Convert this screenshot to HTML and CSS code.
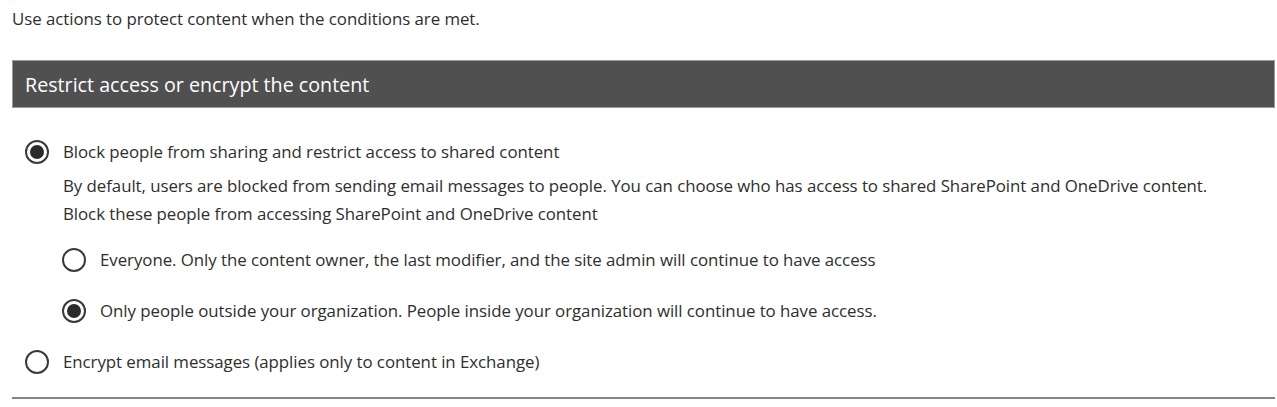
FILE: index.html
```html
<!DOCTYPE html>
<html>
<head>
<meta charset="utf-8">
<link rel="stylesheet" href="styles.css">
</head>
<body>
<div class="page">
  <p class="intro">Use actions to protect content when the conditions are met.</p>
  <div class="section-header">Restrict access or encrypt the content</div>
  <div class="options">
    <div class="option">
      <span class="radio checked"></span>
      <span class="label">Block people from sharing and restrict access to shared content</span>
    </div>
    <div class="details">
      <p class="desc">By default, users are blocked from sending email messages to people. You can choose who has access to shared SharePoint and OneDrive content.</p>
      <p class="desc">Block these people from accessing SharePoint and OneDrive content</p>
      <div class="sub-options">
        <div class="option">
          <span class="radio"></span>
          <span class="label">Everyone. Only the content owner, the last modifier, and the site admin will continue to have access</span>
        </div>
        <div class="option">
          <span class="radio checked"></span>
          <span class="label">Only people outside your organization. People inside your organization will continue to have access.</span>
        </div>
      </div>
    </div>
    <div class="option">
      <span class="radio"></span>
      <span class="label">Encrypt email messages (applies only to content in Exchange)</span>
    </div>
  </div>
  <div class="divider"></div>
</div>
</body>
</html>
```
FILE: styles.css
```css
* { box-sizing: border-box; }
html, body { margin: 0; padding: 0; background: #fff; }
body {
  font-family: "Open Sans", "Noto Sans", sans-serif;
  color: #2e2e2e;
  font-size: 16.85px;
}
.page {
  display: flex;
  flex-direction: column;
  padding: 0 2px 0 12px;
}
p { margin: 0; }
.intro {
  line-height: 20px;
  margin-top: 9px;
  letter-spacing: -0.05px;
}
.section-header {
  margin-top: 31px;
  height: 48px;
  background: #505050;
  border: 1px solid #9a9a9a;
  color: #fff;
  font-size: 19.7px;
  display: flex;
  align-items: center;
  padding-left: 12px;
}
.options {
  display: flex;
  flex-direction: column;
  margin-top: 32px;
  padding-left: 13px;
}
.option {
  display: flex;
  align-items: center;
  height: 24px;
  gap: 14px;
}
.label { line-height: 20px; letter-spacing: -0.05px; }
.radio {
  flex: none;
  width: 24px;
  height: 24px;
  border-radius: 50%;
  border: 2px solid #3a3a3a;
  display: flex;
  align-items: center;
  justify-content: center;
}
.radio.checked::after {
  content: "";
  width: 14px;
  height: 14px;
  border-radius: 50%;
  background: #2b2b2b;
}
.details {
  padding-left: 38px;
  margin-top: 8px;
  display: flex;
  flex-direction: column;
}
.desc { line-height: 28px; letter-spacing: -0.05px; }
.sub-options {
  display: flex;
  flex-direction: column;
  margin-top: 20px;
  margin-left: -1px;
  gap: 27px;
}
.options > .option:last-child { margin-top: 27px; }
.divider {
  margin-top: 23px;
  height: 2px;
  background: #858585;
}
```
